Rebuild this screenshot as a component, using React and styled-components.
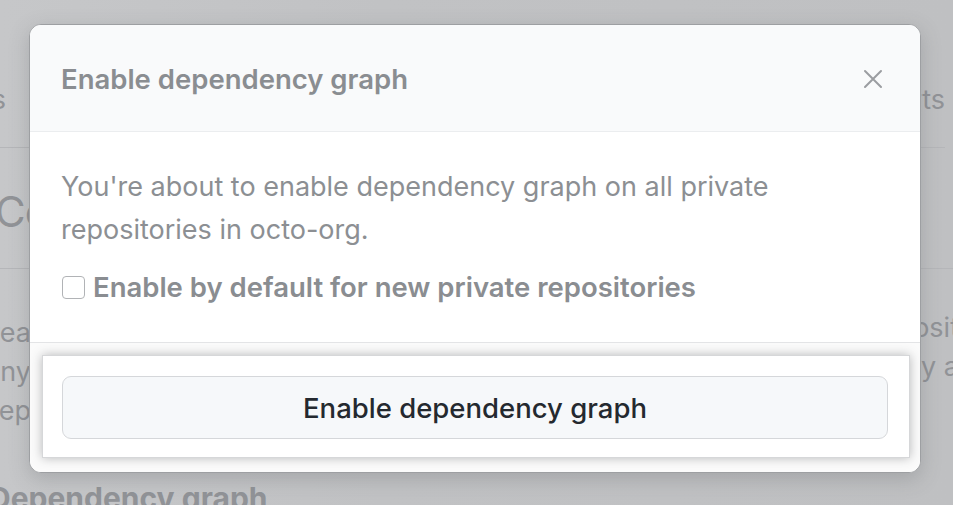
import React from 'react';
import styled, { createGlobalStyle } from 'styled-components';

const GlobalStyle = createGlobalStyle`
  html, body {
    margin: 0;
    padding: 0;
    width: 953px;
    height: 505px;
    overflow: hidden;
    background: #c1c2c4;
    font-family: Inter, "Liberation Sans", Arial, sans-serif;
  }
`;

const Screen = styled.div`
  position: relative;
  width: 953px;
  height: 505px;
  overflow: hidden;
  background: linear-gradient(90deg, #c6c7c9 0%, #c1c2c4 40%, #bfc0c2 100%);
`;

// dimmed settings page that sits behind the dialog
const Page = styled.div`
  display: flex;
  flex-direction: column;
  margin-left: -3px;
  width: 962px;
  color: #919397;
`;

const Tabs = styled.div`
  display: flex;
  justify-content: space-between;
  align-items: center;
  height: 148px;
  margin: 0 14px 0 -90px;
  padding-top: 52px;
  box-sizing: border-box;
  font-size: 27px;
  border-bottom: 1px solid #b5b6b9;
`;

const Heading = styled.div`
  display: flex;
  align-items: center;
  height: 121px;
  padding-top: 6px;
  margin-left: -2px;
  box-sizing: border-box;
  font-size: 42px;
  letter-spacing: -1px;
  border-bottom: 1px solid #b5b6b9;
  white-space: nowrap;
`;

const Lines = styled.div`
  display: flex;
  justify-content: space-between;
  padding-top: 44px;
  font-size: 27px;
  line-height: 39px;
  white-space: nowrap;
`;

const Column = styled.div`
  display: flex;
  flex-direction: column;
  align-items: flex-end;
  width: ${(p) => (p.$right ? 'auto' : '34px')};
  margin-top: ${(p) => (p.$right ? '-5px' : '0')};
`;

const SubHeading = styled.div`
  margin-top: 50px;
  margin-left: -8px;
  font-size: 30px;
  font-weight: 700;
  white-space: nowrap;
`;

const Dialog = styled.div`
  position: absolute;
  top: 24px;
  left: 29px;
  width: 892px;
  height: 449px;
  box-sizing: border-box;
  display: flex;
  flex-direction: column;
  background: #ffffff;
  border: 1px solid #9d9fa2;
  border-radius: 12px;
  box-shadow: 0 6px 20px rgba(80, 82, 86, 0.25);
  overflow: hidden;
`;

const Header = styled.div`
  display: flex;
  align-items: center;
  justify-content: space-between;
  height: 107px;
  flex-shrink: 0;
  box-sizing: border-box;
  padding: 2px 37px 0 31px;
  background: #f9fafb;
  border-bottom: 1px solid #ebedef;
`;

const Title = styled.h2`
  margin: 0;
  font-size: 27.5px;
  font-weight: 600;
  color: #8a8d91;
`;

const Close = styled.button`
  display: flex;
  align-items: center;
  justify-content: center;
  padding: 0;
  border: 0;
  background: none;
  color: #9b9da1;
  cursor: pointer;
`;

const Body = styled.div`
  display: flex;
  flex-direction: column;
  gap: 19px;
  padding: 33px 31px 0;
  height: 211px;
  flex-shrink: 0;
  box-sizing: border-box;
  border-bottom: 1px solid #e3e4e6;
`;

const Text = styled.p`
  margin: 0;
  font-size: 27px;
  line-height: 43px;
  color: #8c8f93;
`;

const CheckRow = styled.label`
  display: flex;
  align-items: center;
  gap: 8px;
  font-size: 27.5px;
  font-weight: 600;
  color: #8a8d91;
`;

const Box = styled.span`
  width: 21px;
  height: 21px;
  margin-left: 1px;
  border: 1.5px solid #b1b3b6;
  border-radius: 4px;
  background: #fff;
  flex-shrink: 0;
`;

const Footer = styled.div`
  flex: 1;
  padding: 12px 10px 13px 12px;
  background: #fbfbfb;
`;

const Highlight = styled.div`
  display: flex;
  align-items: center;
  height: 103px;
  box-sizing: border-box;
  padding: 0 21px 0 19px;
  background: #ffffff;
  border: 1px solid #d6d7d9;
  box-shadow: 0 0 10px rgba(60, 62, 66, 0.35);
`;

const Button = styled.button`
  width: 100%;
  height: 63px;
  margin-top: 2px;
  border: 1.5px solid #d5d7da;
  border-radius: 9px;
  background: #f6f8fa;
  color: #24292f;
  font-family: inherit;
  font-size: 27.5px;
  font-weight: 500;
  cursor: pointer;
`;

export default function App() {
  return (
    <Screen>
      <GlobalStyle />
      <Page>
        <Tabs>
          <span>Options</span>
          <span>Alerts</span>
        </Tabs>
        <Heading>Code security and analysis</Heading>
        <Lines>
          <Column>
            <span>Security features help keep your rea</span>
            <span>Enable or disable for any</span>
            <span>Learn more about dep</span>
          </Column>
          <Column $right>
            <span>repositories in your organization are secure and posit</span>
            <span>and updated. You can enable them for many a</span>
          </Column>
        </Lines>
        <SubHeading>Dependency graph</SubHeading>
      </Page>

      <Dialog role="dialog" aria-label="Enable dependency graph">
        <Header>
          <Title>Enable dependency graph</Title>
          <Close aria-label="Close">
            <svg width="20" height="20" viewBox="0 0 20 20" fill="none" stroke="currentColor" strokeWidth="2" strokeLinecap="round">
              <path d="M2 2 L18 18 M18 2 L2 18" />
            </svg>
          </Close>
        </Header>
        <Body>
          <Text>
            You're about to enable dependency graph on all private
            <br />
            repositories in octo-org.
          </Text>
          <CheckRow>
            <Box />
            Enable by default for new private repositories
          </CheckRow>
        </Body>
        <Footer>
          <Highlight>
            <Button>Enable dependency graph</Button>
          </Highlight>
        </Footer>
      </Dialog>
    </Screen>
  );
}
